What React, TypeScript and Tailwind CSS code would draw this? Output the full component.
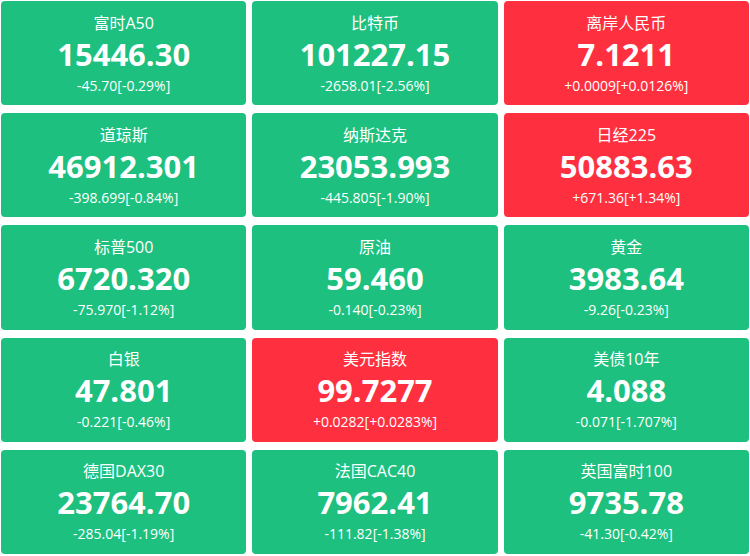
const quotes = [
  { name: "富时A50", price: "15446.30", change: "-45.70[-0.29%]", up: false },
  { name: "比特币", price: "101227.15", change: "-2658.01[-2.56%]", up: false },
  { name: "离岸人民币", price: "7.1211", change: "+0.0009[+0.0126%]", up: true },
  { name: "道琼斯", price: "46912.301", change: "-398.699[-0.84%]", up: false },
  { name: "纳斯达克", price: "23053.993", change: "-445.805[-1.90%]", up: false },
  { name: "日经225", price: "50883.63", change: "+671.36[+1.34%]", up: true },
  { name: "标普500", price: "6720.320", change: "-75.970[-1.12%]", up: false },
  { name: "原油", price: "59.460", change: "-0.140[-0.23%]", up: false },
  { name: "黄金", price: "3983.64", change: "-9.26[-0.23%]", up: false },
  { name: "白银", price: "47.801", change: "-0.221[-0.46%]", up: false },
  { name: "美元指数", price: "99.7277", change: "+0.0282[+0.0283%]", up: true },
  { name: "美债10年", price: "4.088", change: "-0.071[-1.707%]", up: false },
  { name: "德国DAX30", price: "23764.70", change: "-285.04[-1.19%]", up: false },
  { name: "法国CAC40", price: "7962.41", change: "-111.82[-1.38%]", up: false },
  { name: "英国富时100", price: "9735.78", change: "-41.30[-0.42%]", up: false },
];

export default function App() {
  return (
    <div
      className="w-[750px] h-[556px] bg-white pt-px pb-[2px] px-px grid grid-cols-3 grid-rows-5 gap-x-[6px] gap-y-[8px]"
      style={{ fontFamily: '"Open Sans", "Noto Sans CJK SC", sans-serif' }}
    >
      {quotes.map((q) => (
        <div
          key={q.name}
          className={`rounded flex flex-col items-center justify-center text-white ${
            q.up ? "bg-[#fe303f]" : "bg-[#1dc07e]"
          }`}
        >
          <div className="text-[16px] leading-[22px] mt-[1px]">{q.name}</div>
          <div className="text-[31px] leading-[40px] font-bold">{q.price}</div>
          <div className="text-[14px] leading-[20px] mt-[2px]">{q.change}</div>
        </div>
      ))}
    </div>
  );
}
